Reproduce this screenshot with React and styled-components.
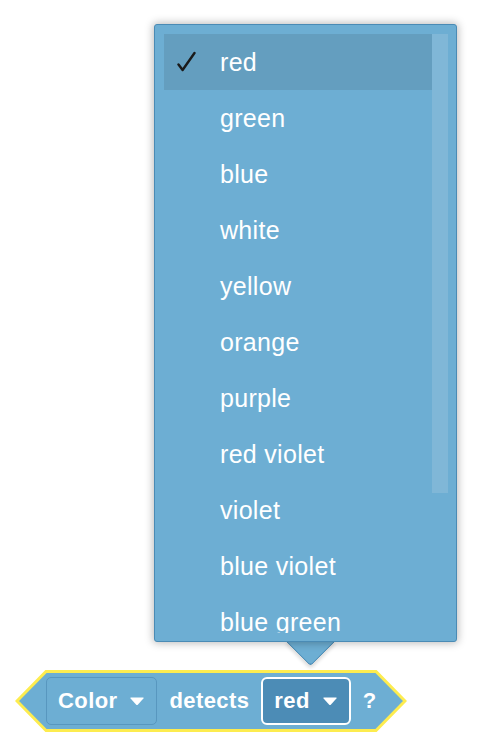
import React from "react";
import styled, { createGlobalStyle } from "styled-components";

const Global = createGlobalStyle`
  html, body { margin: 0; padding: 0; background: #ffffff; }
  body { font-family: "Liberation Sans", Arial, sans-serif; }
`;

const BLUE = "#6daed3";
const DARK = "#4a8bb5";

const Stage = styled.div`
  position: relative;
  z-index: 0;
  width: 482px;
  height: 752px;
  padding-top: 24px;
  box-sizing: border-box;
  display: flex;
  flex-direction: column;
  align-items: flex-start;
`;

const Menu = styled.div`
  position: relative;
  margin-left: 154px;
  width: 303px;
  box-sizing: border-box;
  background: ${BLUE};
  border: 1px solid ${DARK};
  border-radius: 3px;
  padding: 9px 8px 8px 9px;
  box-shadow: 0 0 8px 1px rgba(0, 0, 0, 0.28);
  display: flex;
`;

const List = styled.div`
  width: 268px;
  height: 599px;
  overflow: hidden;
  display: flex;
  flex-direction: column;
`;

const Row = styled.div`
  flex: 0 0 56px;
  display: flex;
  align-items: center;
  padding-left: 56px;
  position: relative;
  background: ${(p) => (p.$selected ? "#649ebf" : "transparent")};
  color: #ffffff;
  font-size: 25px;
  letter-spacing: 0.3px;
`;

const Check = styled.svg`
  position: absolute;
  left: 13px;
  top: 17px;
`;

const ScrollTrack = styled.div`
  width: 16px;
  height: 599px;
  display: flex;
  flex-direction: column;
`;

const Thumb = styled.div`
  width: 16px;
  height: 459px;
  background: #80b7d7;
`;

const Pointer = styled.div`
  position: absolute;
  z-index: -1;
  left: 138px;
  bottom: -18px;
  width: 34px;
  height: 34px;
  background: ${BLUE};
  border-right: 1px solid ${DARK};
  border-bottom: 1px solid ${DARK};
  border-bottom-right-radius: 4px;
  transform: rotate(45deg);
  box-shadow: 2px 2px 4px rgba(0, 0, 0, 0.15);
`;

const Block = styled.div`
  position: relative;
  margin-top: 28px;
  margin-left: 15px;
  width: 392px;
  height: 62px;
  display: flex;
  align-items: center;
  padding-left: 31px;
  box-sizing: border-box;
  gap: 12px;
`;

const BlockShape = styled.svg`
  position: absolute;
  left: 0;
  top: 0;
`;

const Field = styled.div`
  position: relative;
  height: 48px;
  box-sizing: border-box;
  display: flex;
  align-items: center;
  gap: ${(p) => p.$gap}px;
  padding: 0 ${(p) => p.$pad}px;
  border-radius: ${(p) => (p.$active ? 6 : 5)}px;
  border: ${(p) => (p.$active ? "2px solid #ffffff" : "1px solid #5897bf")};
  background: ${(p) => (p.$active ? "#4c8cb6" : BLUE)};
`;

const Label = styled.span`
  position: relative;
  color: #ffffff;
  font-weight: bold;
  font-size: 22px;
  letter-spacing: 0.4px;
`;

const Caret = () => (
  <svg width="16" height="10" viewBox="0 0 16 10">
    <path
      d="M2 1.5 L14 1.5 Q15.2 1.5 14.4 2.6 L9 8.4 Q8 9.4 7 8.4 L1.6 2.6 Q0.8 1.5 2 1.5 Z"
      fill="#ffffff"
    />
  </svg>
);

const items = [
  "red",
  "green",
  "blue",
  "white",
  "yellow",
  "orange",
  "purple",
  "red violet",
  "violet",
  "blue violet",
  "blue green",
  "yellow green",
  "yellow orange",
  "red orange",
];

export default function App() {
  return (
    <>
      <Global />
      <Stage>
        <Menu>
          <List>
            {items.map((it, i) => (
              <Row key={it} $selected={i === 0}>
                {i === 0 && (
                  <Check width="20" height="22" viewBox="0 0 20 22">
                    <path
                      d="M1.5 13.5 L5.6 19 L17.5 2"
                      fill="none"
                      stroke="#1a1a1a"
                      strokeWidth="2.4"
                      strokeLinecap="round"
                      strokeLinejoin="round"
                    />
                  </Check>
                )}
                {it}
              </Row>
            ))}
          </List>
          <ScrollTrack>
            <Thumb />
          </ScrollTrack>
          <Pointer />
        </Menu>
        <Block>
          <BlockShape width="392" height="62" viewBox="0 0 392 62">
            <path
              d="M2 31 L31 1.5 L361 1.5 L390 31 L361 60.5 L31 60.5 Z"
              fill={BLUE}
              stroke="#fdec4f"
              strokeWidth="3"
              strokeLinejoin="miter"
            />
          </BlockShape>
          <Field $pad={11} $gap={12}>
            <Label>Color</Label>
            <Caret />
          </Field>
          <Label>detects</Label>
          <Field $active $pad={11} $gap={12}>
            <Label>red</Label>
            <Caret />
          </Field>
          <Label>?</Label>
        </Block>
      </Stage>
    </>
  );
}
